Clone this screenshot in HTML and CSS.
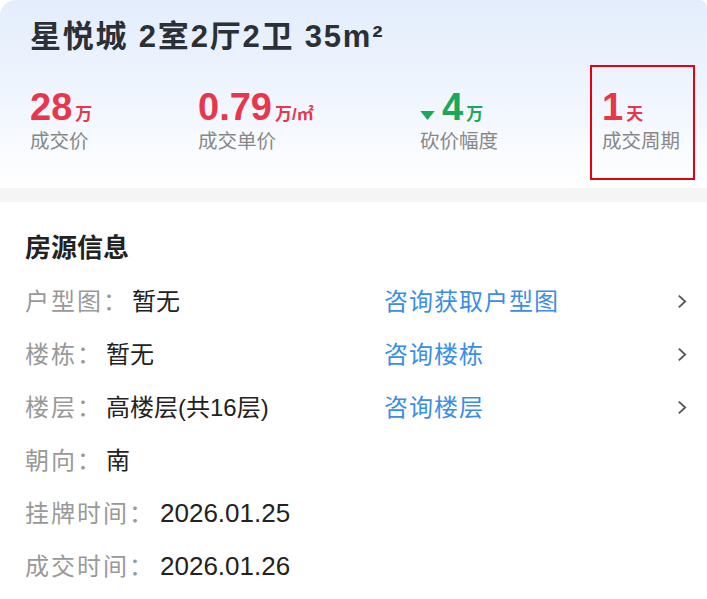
FILE: index.html
```html
<!DOCTYPE html>
<html lang="zh-CN">
  <head>
    <meta charset="UTF-8" />
    <meta name="viewport" content="width=device-width, initial-scale=1.0" />
    <title>成交详情</title>
    <link rel="stylesheet" href="styles.css">
  </head>
  <body>
    <header class="deal">
      <h1 class="deal__title">星悦城 2室2厅2卫 35m²</h1>
      <div class="deal__stats">
        <div class="stat">
          <div class="stat__value"><span class="stat__num">28</span><span class="stat__unit">万</span></div>
          <div class="stat__label">成交价</div>
        </div>
        <div class="stat">
          <div class="stat__value"><span class="stat__num">0.79</span><span class="stat__unit">万/㎡</span></div>
          <div class="stat__label">成交单价</div>
        </div>
        <div class="stat stat--down">
          <div class="stat__value">
            <svg class="stat__arrow" viewBox="0 0 16 10"><path d="M0 0h16L8 10z" fill="currentColor"/></svg>
            <span class="stat__num">4</span><span class="stat__unit">万</span>
          </div>
          <div class="stat__label">砍价幅度</div>
        </div>
        <div class="stat stat--marked">
          <div class="stat__value"><span class="stat__num">1</span><span class="stat__unit">天</span></div>
          <div class="stat__label">成交周期</div>
        </div>
      </div>
    </header>

    <section class="info">
      <h2 class="info__heading">房源信息</h2>
      <div class="info__row">
        <div class="info__field"><span class="info__label">户型图：</span><span class="info__value">暂无</span></div>
        <a class="info__link">咨询获取户型图</a>
        <svg class="info__chevron" viewBox="0 0 9 14"><path d="M1.5 1.5l6 5.5-6 5.5" fill="none" stroke="currentColor" stroke-width="1.7"/></svg>
      </div>
      <div class="info__row">
        <div class="info__field"><span class="info__label">楼栋：</span><span class="info__value">暂无</span></div>
        <a class="info__link">咨询楼栋</a>
        <svg class="info__chevron" viewBox="0 0 9 14"><path d="M1.5 1.5l6 5.5-6 5.5" fill="none" stroke="currentColor" stroke-width="1.7"/></svg>
      </div>
      <div class="info__row">
        <div class="info__field"><span class="info__label">楼层：</span><span class="info__value">高楼层(共16层)</span></div>
        <a class="info__link">咨询楼层</a>
        <svg class="info__chevron" viewBox="0 0 9 14"><path d="M1.5 1.5l6 5.5-6 5.5" fill="none" stroke="currentColor" stroke-width="1.7"/></svg>
      </div>
      <div class="info__row">
        <div class="info__field"><span class="info__label">朝向：</span><span class="info__value">南</span></div>
      </div>
      <div class="info__row">
        <div class="info__field"><span class="info__label">挂牌时间：</span><span class="info__value info__value--num">2026.01.25</span></div>
      </div>
      <div class="info__row">
        <div class="info__field"><span class="info__label">成交时间：</span><span class="info__value info__value--num">2026.01.26</span></div>
      </div>
    </section>
  </body>
</html>
```

FILE: styles.css
```css
* {
  margin: 0;
  padding: 0;
  box-sizing: border-box;
}
body {
  width: 707px;
  font-family: "Liberation Sans", "Noto Sans CJK SC", sans-serif;
  background-color: #fff;
  color: #222;
}
.deal {
  padding: 16px 0 33px 30px;
  border-radius: 16px 8px 0 0;
  background: linear-gradient(180deg, #e3edfc 0%, #f1f6fe 55%, #ffffff 100%);
  border-bottom: 14px solid #f5f5f5;
}
.deal__title {
  font-size: 31px;
  font-weight: 700;
  line-height: 42px;
  letter-spacing: 1.8px;
  color: #2b2f36;
}
.deal__stats {
  margin-top: 31px;
  display: grid;
  grid-template-columns: 168px 222px 182px 1fr;
}
.stat {
  position: relative;
}
.stat__value {
  display: flex;
  align-items: baseline;
  height: 36px;
  color: #e8364b;
  font-weight: 700;
}
.stat__num {
  font-size: 38px;
  line-height: 36px;
}
.stat__unit {
  margin-left: 3px;
  font-size: 17px;
}
.stat__label {
  margin-top: 3px;
  font-size: 19.5px;
  line-height: 27px;
  color: #888;
}
.stat--down .stat__value {
  color: #1aa85a;
}
.stat__arrow {
  width: 15px;
  height: 9px;
  margin-right: 7px;
}
.stat--marked::after {
  content: "";
  position: absolute;
  left: -12px;
  top: -24px;
  width: 101px;
  height: 111px;
  border: 2.5px solid #e60012;
}
.info {
  padding: 28px 20px 0 25px;
}
.info__heading {
  font-size: 26px;
  font-weight: 700;
  line-height: 36px;
  color: #222;
  margin-bottom: 9px;
}
.info__row {
  display: grid;
  grid-template-columns: 359px 1fr auto;
  align-items: center;
  height: 53px;
  font-size: 24px;
  line-height: 34px;
}
.info__label {
  color: #999;
  letter-spacing: 2px;
  margin-right: 3px;
}
.info__value {
  color: #222;
}
.info__value--num {
  font-size: 26px;
  margin-left: 2px;
}
.info__link {
  color: #3a8ee6;
  letter-spacing: 1px;
  cursor: pointer;
}
.info__chevron {
  width: 10px;
  height: 15px;
  color: #555;
}
```
